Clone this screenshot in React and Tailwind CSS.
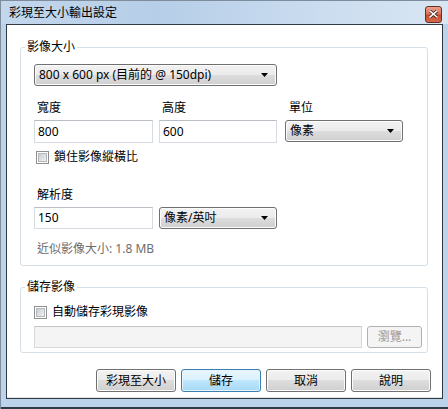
import React from 'react';

const FONT = { fontFamily: '"Noto Sans", "Noto Sans CJK TC", sans-serif' };

const Arrow = () => (
    <svg width="7" height="4" viewBox="0 0 7 4" className="shrink-0">
        <path d="M0 0h7L3.5 4z" fill="#000" />
    </svg>
);

const Select = ({ children, className }) => (
    <div
        className={`h-[22px] flex items-center justify-between pl-[4px] pr-[8px] rounded-[3px] border border-[#707070] bg-[linear-gradient(#f2f2f2_0%,#ebebeb_50%,#dddddd_50%,#cfcfcf_100%)] shadow-[inset_0_0_0_1px_#fcfcfc] text-black ${className}`}
    >
        <span className="leading-none">{children}</span>
        <Arrow />
    </div>
);

const Field = ({ value, className }) => (
    <div
        className={`h-[23px] flex items-center px-[3px] bg-white border border-[#d6dbe1] border-t-[#b9bdc4] text-black ${className}`}
    >
        {value}
    </div>
);

const Checkbox = ({ label }) => (
    <div className="flex items-center gap-[5px] h-[16px]">
        <div className="w-[13px] h-[13px] border border-[#8e8f8f] bg-white flex items-center justify-center">
            <div className="w-[9px] h-[9px] border border-[#b4b8bd] bg-[linear-gradient(135deg,#c9cdd2,#eef0f2)]" />
        </div>
        <span className="leading-none">{label}</span>
    </div>
);

const Button = ({ children, variant }) => {
    if (variant === 'default') {
        return (
            <div className="w-[80px] h-[23px] flex items-center justify-center rounded-[3px] border border-[#3c7fb1] bg-[linear-gradient(#eaf6fd_0%,#d9f0fc_50%,#bee6fd_50%,#a7d9f5_100%)] shadow-[inset_0_0_0_1px_#e4f4fc] text-black">
                {children}
            </div>
        );
    }
    return (
        <div className="w-[80px] h-[23px] flex items-center justify-center rounded-[3px] border border-[#707070] bg-[linear-gradient(#f2f2f2_0%,#ebebeb_50%,#dddddd_50%,#cfcfcf_100%)] shadow-[inset_0_0_0_1px_#fcfcfc] text-black">
            {children}
        </div>
    );
};

const Group = ({ title, children }) => (
    <fieldset className="ml-[13px] w-[408px] border border-[#d5dfe5] rounded-[3px]">
        <legend className="ml-[4px] px-[2px] h-[16px] leading-[16px] text-black">{title}</legend>
        {children}
    </fieldset>
);

export default function App() {
    return (
        <div
            className="w-[448px] h-[409px] flex flex-col bg-[#bcd3ea] border-l border-t border-[#7d8d9d] overflow-hidden text-[12px]"
            style={FONT}
        >
            {/* Title bar */}
            <div className="h-[23px] shrink-0 flex items-center justify-between pl-[8px] pr-[6px] bg-[linear-gradient(90deg,#c3d7ec_0%,#b6cee8_35%,#c7daee_65%,#d9e6f3_100%)]">
                <span className="text-black text-[12px] leading-none">彩現至大小輸出設定</span>
                <div className="w-[17px] h-[17px] mt-[3px] rounded-[3px] border border-[#6b2d22] bg-[linear-gradient(#eaa08f_0%,#d9745c_45%,#c74a30_55%,#d56a4c_100%)] flex items-center justify-center">
                    <svg width="9" height="8" viewBox="0 0 9 8">
                        <path d="M1 1l7 6M8 1L1 7" stroke="#3a1a14" strokeWidth="3" strokeLinecap="square" />
                        <path d="M1 1l7 6M8 1L1 7" stroke="#fff" strokeWidth="1.6" strokeLinecap="square" />
                    </svg>
                </div>
            </div>

            {/* Client area */}
            <div className="ml-[5px] w-[437px] h-[375px] shrink-0 bg-white border border-[#2f3a44] shadow-[inset_0_-1px_0_#e3e3e3] flex flex-col">
                <div className="h-[14px]" />
                <Group title="影像大小">
                    <div className="pl-[13px] pt-[9px] pb-[8px] flex flex-col">
                        <Select className="w-[243px]">800 x 600 px (目前的 @ 150dpi)</Select>

                        <div className="mt-[14px] flex gap-[6px]">
                            <div className="w-[119px] flex flex-col">
                                <span className="pl-[3px] h-[16px] leading-[16px]">寬度</span>
                                <Field className="mt-[4px]" value="800" />
                            </div>
                            <div className="w-[118px] flex flex-col">
                                <span className="pl-[3px] h-[16px] leading-[16px]">高度</span>
                                <Field className="mt-[4px]" value="600" />
                            </div>
                            <div className="ml-[2px] w-[118px] flex flex-col">
                                <span className="pl-[4px] h-[16px] leading-[16px]">單位</span>
                                <Select className="mt-[4px]">像素</Select>
                            </div>
                        </div>

                        <div className="mt-[6px] pl-[2px]">
                            <Checkbox label="鎖住影像縱橫比" />
                        </div>

                        <span className="mt-[22px] pl-[3px] h-[16px] leading-[16px]">解析度</span>
                        <div className="mt-[4px] flex gap-[6px]">
                            <Field className="w-[119px] !h-[22px]" value="150" />
                            <Select className="w-[118px]">像素/英吋</Select>
                        </div>

                        <span className="mt-[12px] pl-[3px] h-[16px] leading-[16px] text-[#6d6d6d]">近似影像大小: 1.8 MB</span>
                    </div>
                </Group>

                <div className="h-[13px]" />
                <Group title="儲存影像">
                    <div className="pl-[13px] pt-[9px] pb-[4px] flex flex-col">
                        <Checkbox label="自動儲存彩現影像" />
                        <div className="mt-[6px] flex gap-[5px]">
                            <div className="w-[328px] h-[22px] bg-[#f4f4f4] border border-[#d8d8d8] border-t-[#c4c4c4]" />
                            <div className="w-[55px] h-[22px] flex items-center justify-center rounded-[3px] border border-[#adb2b5] bg-[#f4f4f4] text-[#9a9a9a]">
                                瀏覽...
                            </div>
                        </div>
                    </div>
                </Group>

                <div className="mt-[16px] pr-[11px] flex justify-end gap-[5px]">
                    <Button>彩現至大小</Button>
                    <Button variant="default">儲存</Button>
                    <Button>取消</Button>
                    <Button>說明</Button>
                </div>
            </div>

            <div className="h-[8px] shrink-0" />
            <div className="h-[2px] shrink-0 bg-[#2f3a44]" />
        </div>
    );
}
